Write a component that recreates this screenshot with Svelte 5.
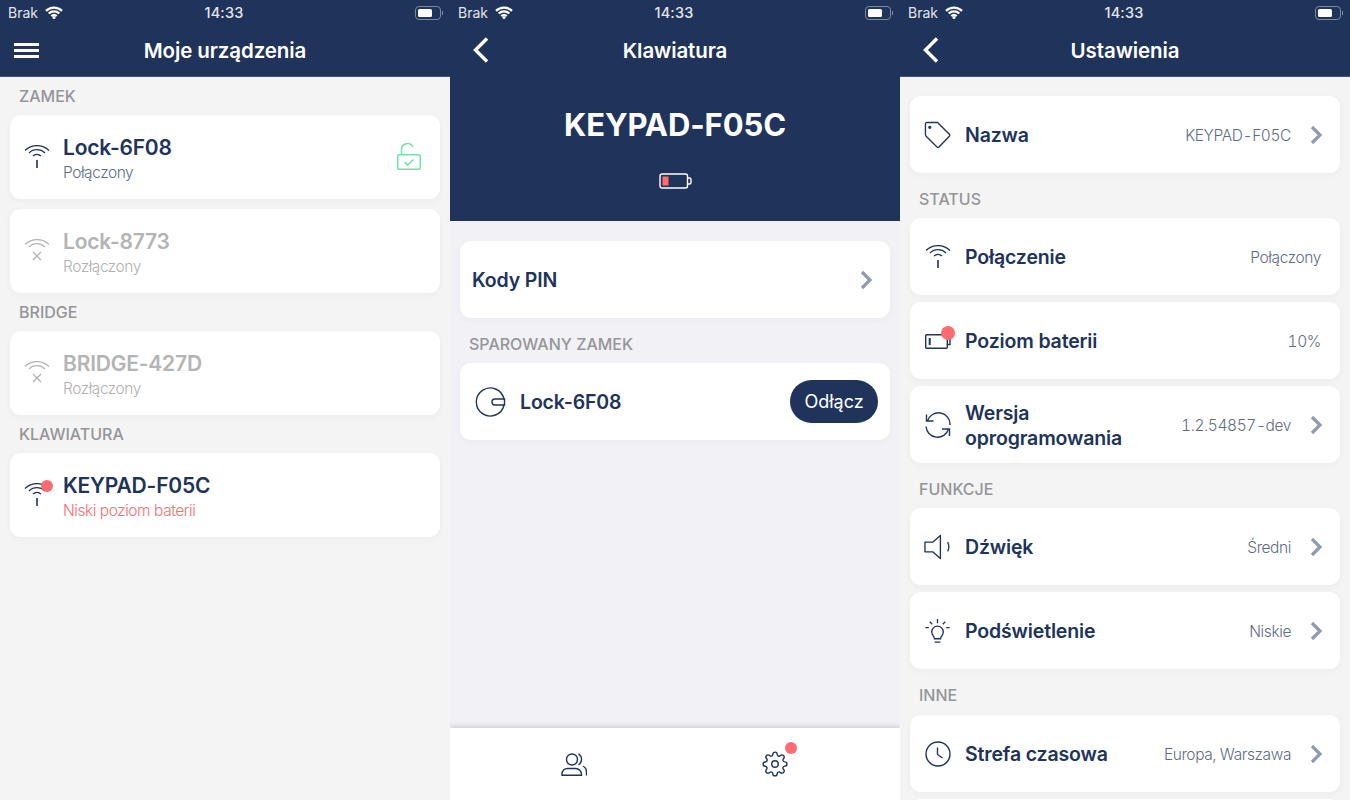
<script>
	const lockGroups = [
		{
			title: 'ZAMEK',
			items: [{ name: 'Lock-6F08', status: 'Połączony', kind: 'on', lock: true }]
		},
		{
			title: null,
			items: [{ name: 'Lock-8773', status: 'Rozłączony', kind: 'off' }]
		},
		{
			title: 'BRIDGE',
			items: [{ name: 'BRIDGE-427D', status: 'Rozłączony', kind: 'off' }]
		},
		{
			title: 'KLAWIATURA',
			items: [{ name: 'KEYPAD-F05C', status: 'Niski poziom baterii', kind: 'low' }]
		}
	];

	const settings = [
		{
			title: null,
			rows: [{ icon: 'tag', label: 'Nazwa', value: 'KEYPAD-F05C', more: true }]
		},
		{
			title: 'STATUS',
			rows: [
				{ icon: 'wifi', label: 'Połączenie', value: 'Połączony' },
				{ icon: 'battery', label: 'Poziom baterii', value: '10%' },
				{ icon: 'sync', label: 'Wersja oprogramowania', value: '1.2.54857-dev', more: true }
			]
		},
		{
			title: 'FUNKCJE',
			rows: [
				{ icon: 'sound', label: 'Dźwięk', value: 'Średni', more: true },
				{ icon: 'bulb', label: 'Podświetlenie', value: 'Niskie', more: true }
			]
		},
		{
			title: 'INNE',
			rows: [
				{ icon: 'clock', label: 'Strefa czasowa', value: 'Europa, Warszawa', more: true },
				{ icon: null, label: '', value: '' }
			]
		}
	];
</script>

{#snippet statusBar()}
	<div class="status">
		<span class="carrier">Brak</span>
		<svg class="sb-wifi" width="18" height="13" viewBox="0 0 18 13">
			<path d="M1 4.800a11.600 11.600 0 0 1 16 0M3.700 7.500a7.700 7.700 0 0 1 10.600 0M6.300 10.100a4 4 0 0 1 5.400 0" fill="none" stroke="#fff" stroke-width="2.300" />
			<circle cx="9" cy="11.500" r="1.500" fill="#fff" />
		</svg>
		<span class="time">14:33</span>
		<span class="sb-battery"><span class="sb-fill"></span></span>
	</div>
{/snippet}

{#snippet chevron()}
	<svg class="chevron" width="14" height="20" viewBox="0 0 14 20">
		<path d="M3 2l8 8-8 8" fill="none" stroke="#8f99b0" stroke-width="3.200" />
	</svg>
{/snippet}

{#snippet back()}
	<svg class="nav-left" width="18" height="26" viewBox="0 0 18 26">
		<path d="M15 1.500 3.500 13 15 24.500" fill="none" stroke="#fff" stroke-width="3.400" />
	</svg>
{/snippet}

{#snippet wifi(color)}
	<svg width="26" height="24" viewBox="0 0 26 24" fill="none" stroke={color} stroke-width="1.200">
		<path d="M1 5.500a17 17 0 0 1 24 0M5 8a11.400 11.400 0 0 1 16 0M9 11a5.600 5.600 0 0 1 8 0" />
		<path d="M13 15v8" stroke-width="1.600" />
	</svg>
{/snippet}

{#snippet wifiOff()}
	<svg width="26" height="24" viewBox="0 0 26 24" fill="none" stroke="#b4b4b4" stroke-width="1.200">
		<path d="M1 5.500a17 17 0 0 1 24 0M5 8a11.400 11.400 0 0 1 16 0" />
		<path d="M9 13l8 8M17 13l-8 8" stroke-width="1.400" />
	</svg>
{/snippet}

{#snippet rowIcon(name)}
	{#if name === 'tag'}
		<svg width="28" height="28" viewBox="0 0 28 28" fill="none" stroke="#20335a" stroke-width="1.400" stroke-linejoin="round">
			<path d="M1.500 2.500a1.500 1.500 0 0 1 1.500-1.500h11l12.300 12.300a1.500 1.500 0 0 1 0 2L15.500 26.500a1.500 1.500 0 0 1-2 0L2.500 15.500a3 3 0 0 1-1-2z" />
			<circle cx="6" cy="6" r="1" fill="#20335a" />
		</svg>
	{:else if name === 'wifi'}
		{@render wifi('#20335a')}
	{:else if name === 'battery'}
		<span class="icon-badge">
			<svg width="26" height="18" viewBox="0 0 26 18" fill="none" stroke="#20335a" stroke-width="1.400">
				<rect x="0.700" y="2.700" width="21.600" height="13.600" rx="1" />
				<path d="M22.500 6.500h2.500v6h-2.500" />
				<path d="M4.700 6v7" stroke-width="2" />
			</svg>
			<span class="dot battery-dot"></span>
		</span>
	{:else if name === 'sync'}
		<svg width="26" height="26" viewBox="0 0 26 26" fill="none" stroke="#20335a" stroke-width="1.400">
			<path d="M25 13A11.500 11.500 0 0 0 2.500 9" />
			<path d="M1.500 2.500V9h7" />
			<path d="M1 14.500A11.500 11.500 0 0 0 23.500 17" />
			<path d="M24.500 24v-7h-7.500" />
		</svg>
	{:else if name === 'sound'}
		<svg width="28" height="26" viewBox="0 0 28 26" fill="none" stroke="#20335a" stroke-width="1.400" stroke-linejoin="round">
			<path d="M1 8h8L17 1v24L9 18H1z" />
			<path d="M24.500 8a10 10 0 0 1 0 9.500" />
		</svg>
	{:else if name === 'bulb'}
		<svg width="28" height="26" viewBox="0 0 28 26" fill="none" stroke="#20335a" stroke-width="1.400">
			<path d="M10.800 21c0-2.500-2.800-3.500-2.800-7a6 6 0 0 1 12 0c0 3.500-2.800 4.500-2.800 7z" />
			<path d="M11 24.500h6M14 .5V5M6 3.500 8.500 6M22 3.500 19.500 6M1.500 9.500H5M23 9.500h3.500" />
		</svg>
	{:else if name === 'clock'}
		<svg width="26" height="26" viewBox="0 0 26 26" fill="none" stroke="#20335a" stroke-width="1.400">
			<circle cx="13" cy="13" r="12" />
			<path d="M12.500 6.500v7l5 3.500" />
		</svg>
	{/if}
{/snippet}

<div class="screens">
	<section class="screen screen-list">
		<div class="topbar">
			{@render statusBar()}
			<div class="nav">
				<span class="burger"><i></i><i></i><i></i></span>
				<h1>Moje urządzenia</h1>
			</div>
		</div>
		<div class="device-list">
			{#each lockGroups as group}
				{#if group.title}
					<h2 class="section">{group.title}</h2>
				{/if}
				{#each group.items as item}
					<div class="card device" class:off={item.kind === 'off'} class:spaced={!group.title}>
						<span class="icon-badge device-icon">
							{#if item.kind === 'off'}
								{@render wifiOff()}
							{:else}
								{@render wifi('#20335a')}
							{/if}
							{#if item.kind === 'low'}
								<span class="dot wifi-dot"></span>
							{/if}
						</span>
						<div class="device-text">
							<div class="device-name">{item.name}</div>
							<div class="device-status" class:low={item.kind === 'low'}>{item.status}</div>
						</div>
						{#if item.lock}
							<svg class="lock" width="26" height="28" viewBox="0 0 26 28" fill="none" stroke="#6fe3a3" stroke-width="1.500">
								<path d="M5.500 11V6.500a6 6 0 0 1 11.500-2.300" />
								<rect x="1.700" y="11.700" width="22.600" height="14.600" rx="1.500" />
								<path d="M8.500 19l3 3 6-5.500" />
							</svg>
						{/if}
					</div>
				{/each}
			{/each}
		</div>
	</section>

	<section class="screen screen-keypad">
		<div class="topbar">
			{@render statusBar()}
			<div class="nav">
				{@render back()}
				<h1>Klawiatura</h1>
			</div>
			<div class="hero">
				<div class="hero-name">KEYPAD-F05C</div>
				<svg width="33" height="16" viewBox="0 0 33 16" fill="none">
					<rect x="1" y="1" width="27.500" height="14" rx="2" stroke="#fff" stroke-width="1.400" />
					<rect x="3.500" y="3.500" width="6" height="9" fill="#ff6b70" />
					<path d="M28.500 5h2a1.500 1.500 0 0 1 1.500 1.500v3a1.500 1.500 0 0 1-1.500 1.500h-2" stroke="#fff" stroke-width="1.400" />
				</svg>
			</div>
		</div>
		<div class="keypad-body">
			<div class="card row pin-row">
				<span class="row-label">Kody PIN</span>
				{@render chevron()}
			</div>
			<h2 class="section">SPAROWANY ZAMEK</h2>
			<div class="card row paired-row">
				<svg width="32" height="32" viewBox="0 0 32 32" fill="none" stroke="#20335a" stroke-width="1.400">
					<path d="M30 13a14 14 0 1 0 0 6" />
					<path d="M30.500 13H21a3 3 0 0 0 0 6h9.500z" />
				</svg>
				<span class="row-label">Lock-6F08</span>
				<span class="unpair">Odłącz</span>
			</div>
		</div>
		<div class="tabbar">
			<svg width="26" height="23" viewBox="0 0 26 23" fill="none" stroke="#20335a" stroke-width="1.400">
				<circle cx="11" cy="6.500" r="5.500" />
				<path d="M1 22.300V21a5.500 5.500 0 0 1 5.500-5.500h8a6 6 0 0 1 6 6v.8z" />
				<path d="M17.500.8a6.500 6.500 0 0 1 0 11M22 13a7 7 0 0 1 3.500 6v3.500" />
			</svg>
			<span class="icon-badge">
				<svg width="26" height="26" viewBox="0 0 24 24" fill="none" stroke="#20335a" stroke-width="1.300" stroke-linejoin="round">
					<circle cx="12" cy="12" r="3" />
					<path d="M19.400 15a1.700 1.700 0 0 0 .3 1.800l.1.100a2 2 0 1 1-2.900 2.900l-.1-.1a1.700 1.700 0 0 0-2.800 1.200v.1a2 2 0 1 1-4 0V21a1.700 1.700 0 0 0-2.900-1.200l-.1.100a2 2 0 1 1-2.900-2.900l.1-.1a1.700 1.700 0 0 0-1.200-2.800H3a2 2 0 1 1 0-4h.1a1.700 1.700 0 0 0 1.200-2.900l-.1-.1a2 2 0 1 1 2.900-2.900l.1.100a1.700 1.700 0 0 0 1.800.3H9a1.700 1.700 0 0 0 1-1.500V3a2 2 0 1 1 4 0v.1a1.700 1.700 0 0 0 2.900 1.200l.1-.1a2 2 0 1 1 2.900 2.900l-.1.100a1.700 1.700 0 0 0-.3 1.800V9a1.700 1.700 0 0 0 1.500 1H21a2 2 0 1 1 0 4h-.1a1.700 1.700 0 0 0-1.500 1z" />
				</svg>
				<span class="dot gear-dot"></span>
			</span>
		</div>
	</section>

	<section class="screen screen-settings">
		<div class="topbar">
			{@render statusBar()}
			<div class="nav">
				{@render back()}
				<h1>Ustawienia</h1>
			</div>
		</div>
		<div class="settings-body">
			{#each settings as group}
				{#if group.title}
					<h2 class="section">{group.title}</h2>
				{/if}
				<div class="stack">
					{#each group.rows as row}
						<div class="card row setting">
							<span class="setting-icon">
								{#if row.icon}
									{@render rowIcon(row.icon)}
								{/if}
							</span>
							<span class="row-label">{row.label}</span>
							<span class="value">{row.value}</span>
							{#if row.more}
								{@render chevron()}
							{/if}
						</div>
					{/each}
				</div>
			{/each}
		</div>
	</section>
</div>

<style>
	:global(body) {
		margin: 0;
		background: #f4f4f4;
	}

	.screens {
		display: grid;
		grid-template-columns: repeat(3, 450px);
		height: 800px;
		overflow: hidden;
		font-family: Inter, 'Noto Sans', sans-serif;
		color: #20335a;
	}

	.screen {
		display: flex;
		flex-direction: column;
		height: 800px;
		overflow: hidden;
		background: #f4f4f4;
	}

	.topbar {
		background: #20335a;
		color: #fff;
		flex-shrink: 0;
	}

	.status {
		display: flex;
		align-items: center;
		height: 25px;
		padding: 0 9px 0 8px;
		font-size: 14px;
		color: #e3e6ec;
	}

	.sb-wifi {
		margin-left: 7px;
	}

	.time {
		margin-left: auto;
		margin-right: auto;
		font-size: 14.500px;
		font-weight: 500;
		letter-spacing: 0.2px;
		transform: translateX(-15px);
	}

	.sb-battery {
		position: relative;
		display: block;
		box-sizing: border-box;
		width: 26px;
		height: 14px;
		border: 1px solid #7c87a0;
		border-radius: 4px;
		padding: 2px;
	}

	.sb-battery::after {
		content: '';
		position: absolute;
		right: -3px;
		top: 4px;
		width: 1px;
		height: 4px;
		background: #7c87a0;
	}

	.sb-fill {
		display: block;
		width: 14px;
		height: 100%;
		background: #fff;
		border-radius: 1.500px;
	}

	.nav {
		position: relative;
		display: flex;
		align-items: center;
		justify-content: center;
		height: 51px;
		border-bottom: 1px solid #46557a;
	}

	.screen-keypad .nav {
		border-bottom-color: #20335a;
	}

	.nav h1 {
		margin: 0;
		font-size: 20.500px;
		font-weight: 600;
		letter-spacing: -0.1px;
	}

	.burger {
		position: absolute;
		left: 14px;
		top: 18px;
		display: flex;
		flex-direction: column;
		gap: 3px;
		width: 25px;
	}

	.burger i {
		display: block;
		height: 3px;
		background: #fff;
	}

	.nav-left {
		position: absolute;
		left: 22px;
		top: 12px;
	}

	.section {
		display: flex;
		align-items: center;
		margin: 0;
		padding-left: 19px;
		font-size: 16px;
		font-weight: 500;
		color: #959599;
	}

	.card {
		background: #fff;
		border-radius: 11px;
		margin: 0 10px;
		box-shadow: 0 2px 7px rgba(40, 50, 80, 0.04);
	}

	.device-list {
		display: flex;
		flex-direction: column;
	}

	.device-list .section {
		height: 38px;
	}

	.device {
		display: flex;
		align-items: center;
		height: 84px;
		padding: 0 18px 0 14px;
	}

	.device.spaced {
		margin-top: 10px;
	}

	.device-icon {
		margin-right: 13px;
	}

	.device-text {
		flex: 1;
		padding-top: 3px;
	}

	.device-name {
		font-size: 21px;
		font-weight: 600;
		line-height: 28px;
		letter-spacing: -0.2px;
	}

	.device-status {
		font-size: 15.500px;
		font-weight: 300;
		line-height: 21px;
		letter-spacing: -0.45px;
		color: #5f6c88;
	}

	.device-status.low {
		color: #ff6b70;
	}

	.device.off .device-name {
		color: #b4b4b4;
	}

	.device.off .device-status {
		color: #b0b0b0;
	}

	.icon-badge {
		position: relative;
		display: inline-flex;
	}

	.dot {
		position: absolute;
		width: 12px;
		height: 12px;
		border-radius: 50%;
		background: #ff6b70;
	}

	.wifi-dot {
		right: -3px;
		top: -3px;
	}

	.battery-dot {
		right: -4px;
		top: -6px;
		width: 14px;
		height: 14px;
	}

	.gear-dot {
		right: -9px;
		top: -9px;
	}

	.screen-keypad {
		background: #f1f1f6;
	}

	.hero {
		display: flex;
		flex-direction: column;
		align-items: center;
		height: 144px;
		padding-top: 27px;
		box-sizing: border-box;
	}

	.hero-name {
		font-size: 31px;
		font-weight: 700;
		line-height: 42px;
		letter-spacing: -0.1px;
		margin-bottom: 27px;
	}

	.keypad-body {
		flex: 1;
		padding-top: 20px;
	}

	.keypad-body .section {
		height: 45px;
		padding-top: 6px;
		box-sizing: border-box;
	}

	.row {
		display: flex;
		align-items: center;
		height: 77px;
	}

	.row-label {
		padding-top: 2px;
		font-size: 19.500px;
		font-weight: 600;
		line-height: 25px;
		letter-spacing: -0.15px;
	}

	.pin-row {
		justify-content: space-between;
		padding: 0 17px 0 12px;
	}

	.paired-row {
		padding: 0 12px 0 14px;
		gap: 14px;
	}

	.paired-row .row-label {
		flex: 1;
	}

	.unpair {
		display: flex;
		align-items: center;
		justify-content: center;
		width: 88px;
		height: 43px;
		border-radius: 22px;
		background: #20335a;
		color: #fff;
		font-size: 18px;
	}

	.tabbar {
		display: flex;
		justify-content: space-between;
		align-items: center;
		flex-shrink: 0;
		height: 72px;
		padding: 0 112px 0 111px;
		box-sizing: border-box;
		background: #fff;
		box-shadow: 0 -2px 5px rgba(0, 0, 0, 0.14);
	}

	.settings-body {
		display: flex;
		flex-direction: column;
		padding-top: 19px;
	}

	.settings-body .section {
		height: 45px;
		padding-top: 6px;
		box-sizing: border-box;
	}

	.stack {
		display: flex;
		flex-direction: column;
		gap: 7px;
	}

	.stack:last-child {
		margin-top: 1px;
	}

	.setting {
		padding: 0 17px 0 14px;
		flex-shrink: 0;
	}

	.setting-icon {
		display: flex;
		align-items: center;
		justify-content: center;
		width: 27px;
		margin-right: 14px;
	}

	.setting .row-label {
		max-width: 190px;
	}

	.value {
		margin-left: auto;
		padding: 2px 2px 0 0;
		font-size: 15.500px;
		font-weight: 300;
		letter-spacing: -0.4px;
		font-variant-numeric: tabular-nums;
		color: #5f6c88;
	}

	.chevron {
		margin-left: 16px;
	}
</style>
